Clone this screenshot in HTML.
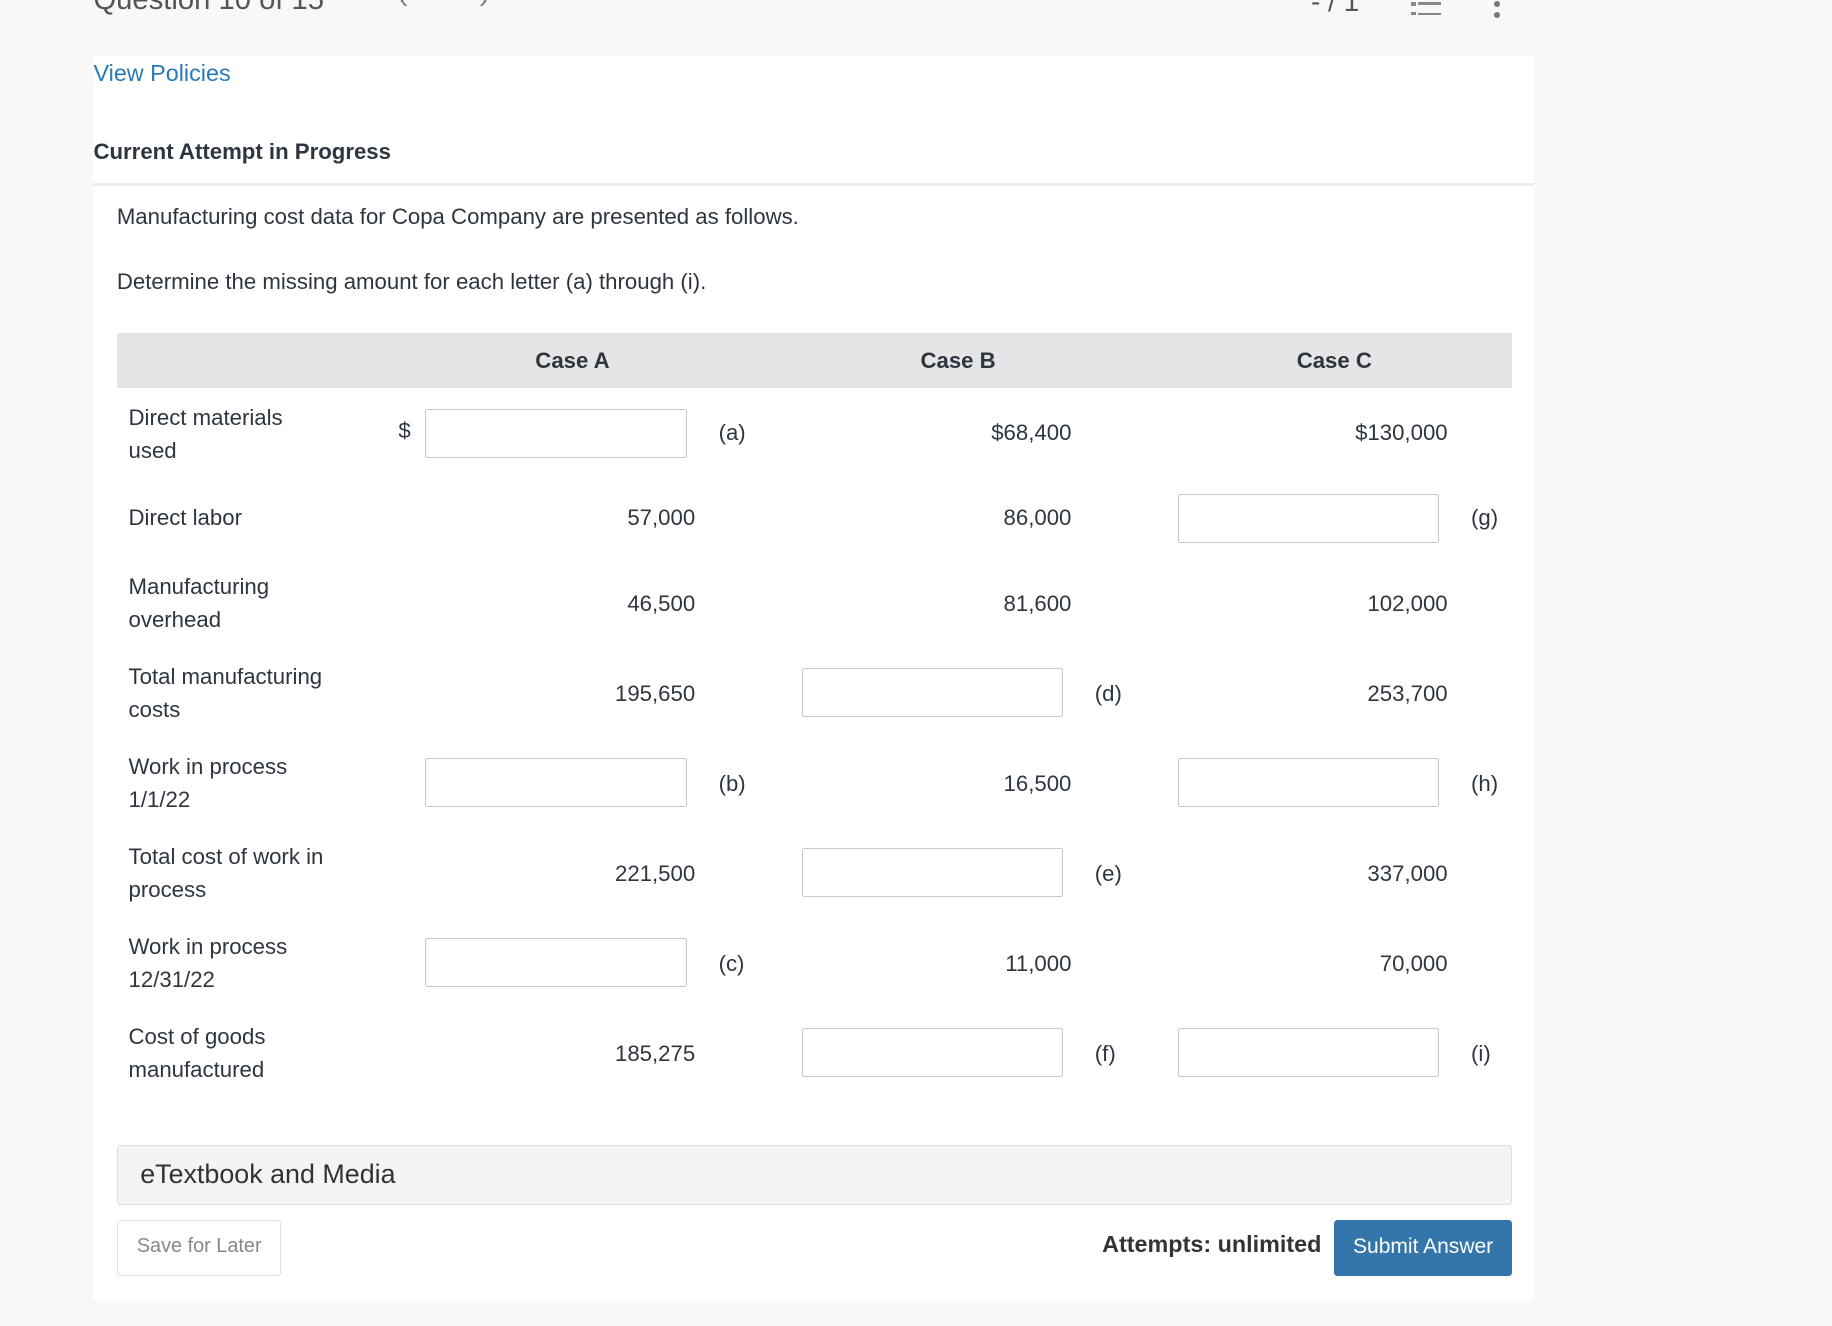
<!DOCTYPE html>
<html><head><meta charset="utf-8">
<style>
html,body{margin:0;padding:0;}
body{width:1832px;height:1326px;overflow:hidden;background:#f8f8f8;}
#w{zoom:1.1684;width:1568px;height:1135px;position:relative;font-family:"Liberation Sans",sans-serif;color:#2d3640;}
.a{position:absolute;white-space:nowrap;}
.t{font-size:19px;line-height:28px;}
.inp{position:absolute;width:222px;height:40px;border:1px solid #c8c8c8;border-radius:2px;background:#fff;}
.r{text-align:right;width:150px;}
</style></head><body><div id="w">
<div class="a" style="left:80px;top:-14px;font-size:25px;color:#555;">Question 10 of 15</div>
<div class="a" style="left:342px;top:-12px;font-size:22px;color:#777;">&#8249;</div>
<div class="a" style="left:410px;top:-12px;font-size:22px;color:#777;">&#8250;</div>
<div class="a" style="left:1122px;top:-12px;font-size:24px;color:#555;">- / 1</div>
<div class="a" style="left:1208px;top:2px;width:4px;height:3px;background:#888"></div>
<div class="a" style="left:1214px;top:2px;width:19px;height:2px;background:#888"></div>
<div class="a" style="left:1208px;top:10px;width:4px;height:3px;background:#888"></div>
<div class="a" style="left:1214px;top:11px;width:19px;height:2px;background:#888"></div>
<div class="a" style="left:1279px;top:1px;width:5px;height:5px;border-radius:50%;background:#777"></div>
<div class="a" style="left:1279px;top:10px;width:5px;height:5px;border-radius:50%;background:#777"></div>

<div class="a" style="left:80px;top:48px;width:1233px;height:1065px;background:#fff;"></div>
<div class="a" style="left:80px;top:51px;font-size:20px;color:#2a7ab8;">View Policies</div>
<div class="a" style="left:80px;top:119px;font-size:19px;font-weight:bold;">Current Attempt in Progress</div>
<div class="a" style="left:80px;top:157px;width:1233px;height:2px;background:#ececec;"></div>
<div class="a t" style="left:100px;top:172px;">Manufacturing cost data for Copa Company are presented as follows.</div>
<div class="a t" style="left:100px;top:228px;">Determine the missing amount for each letter (a) through (i).</div>

<div class="a" style="left:100px;top:285px;width:1194px;height:47px;background:#e5e5e5;"></div>
<div class="a t" style="left:390px;width:200px;text-align:center;top:295px;font-weight:bold;">Case A</div>
<div class="a t" style="left:720px;width:200px;text-align:center;top:295px;font-weight:bold;">Case B</div>
<div class="a t" style="left:1042px;width:200px;text-align:center;top:295px;font-weight:bold;">Case C</div>

<div class="a t" style="left:110px;top:344px;">Direct materials<br>used</div>
<div class="a t" style="left:110px;top:430px;">Direct labor</div>
<div class="a t" style="left:110px;top:489px;">Manufacturing<br>overhead</div>
<div class="a t" style="left:110px;top:566px;">Total manufacturing<br>costs</div>
<div class="a t" style="left:110px;top:643px;">Work in process<br>1/1/22</div>
<div class="a t" style="left:110px;top:720px;">Total cost of work in<br>process</div>
<div class="a t" style="left:110px;top:797px;">Work in process<br>12/31/22</div>
<div class="a t" style="left:110px;top:874px;">Cost of goods<br>manufactured</div>

<div class="a t" style="left:341px;top:355px;">$</div>
<div class="inp" style="left:364px;top:350px;"></div><div class="a t" style="left:615px;top:357px;">(a)</div>
<div class="a t r" style="left:767px;top:357px;">$68,400</div>
<div class="a t r" style="left:1089px;top:357px;">$130,000</div>

<div class="a t r" style="left:445px;top:430px;">57,000</div>
<div class="a t r" style="left:767px;top:430px;">86,000</div>
<div class="inp" style="left:1008px;top:423px;"></div><div class="a t" style="left:1259px;top:430px;">(g)</div>

<div class="a t r" style="left:445px;top:503px;">46,500</div>
<div class="a t r" style="left:767px;top:503px;">81,600</div>
<div class="a t r" style="left:1089px;top:503px;">102,000</div>

<div class="a t r" style="left:445px;top:580px;">195,650</div>
<div class="inp" style="left:686px;top:572px;"></div><div class="a t" style="left:937px;top:580px;">(d)</div>
<div class="a t r" style="left:1089px;top:580px;">253,700</div>

<div class="inp" style="left:364px;top:649px;"></div><div class="a t" style="left:615px;top:657px;">(b)</div>
<div class="a t r" style="left:767px;top:657px;">16,500</div>
<div class="inp" style="left:1008px;top:649px;"></div><div class="a t" style="left:1259px;top:657px;">(h)</div>

<div class="a t r" style="left:445px;top:734px;">221,500</div>
<div class="inp" style="left:686px;top:726px;"></div><div class="a t" style="left:937px;top:734px;">(e)</div>
<div class="a t r" style="left:1089px;top:734px;">337,000</div>

<div class="inp" style="left:364px;top:803px;"></div><div class="a t" style="left:615px;top:811px;">(c)</div>
<div class="a t r" style="left:767px;top:811px;">11,000</div>
<div class="a t r" style="left:1089px;top:811px;">70,000</div>

<div class="a t r" style="left:445px;top:888px;">185,275</div>
<div class="inp" style="left:686px;top:880px;"></div><div class="a t" style="left:937px;top:888px;">(f)</div>
<div class="inp" style="left:1008px;top:880px;"></div><div class="a t" style="left:1259px;top:888px;">(i)</div>

<div class="a" style="left:100px;top:980px;width:1192px;height:50px;background:#f4f4f4;border:1px solid #ddd;border-radius:3px;"></div>
<div class="a" style="left:120px;top:992px;font-size:23px;color:#333;">eTextbook and Media</div>
<div class="a" style="left:100px;top:1044px;width:139px;height:46px;border:1px solid #ddd;border-radius:3px;background:#fff;"></div>
<div class="a" style="left:100px;top:1057px;width:141px;text-align:center;font-size:17px;color:#888;">Save for Later</div>
<div class="a" style="left:900px;width:231px;text-align:right;top:1054px;font-size:20px;font-weight:bold;color:#333;">Attempts: unlimited</div>
<div class="a" style="left:1142px;top:1044px;width:152px;height:48px;background:#3476a9;border-radius:3px;"></div>
<div class="a" style="left:1142px;top:1057px;width:152px;text-align:center;font-size:18px;color:#fff;">Submit Answer</div>
</div></body></html>
